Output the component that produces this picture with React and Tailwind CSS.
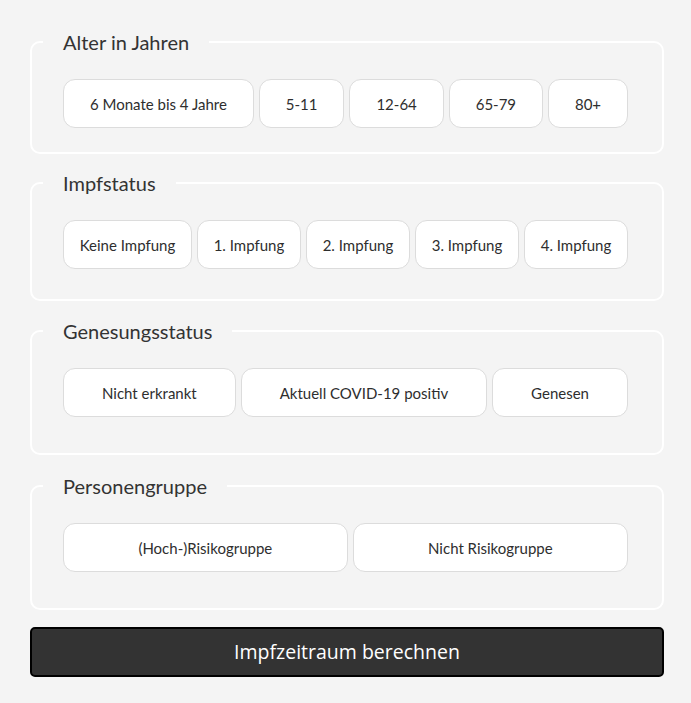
import React from "react";

const groups = [
  { title: "Alter in Jahren", items: ["6 Monate bis 4 Jahre", "5-11", "12-64", "65-79", "80+"], pb: "pb-[24px]", mt: "" },
  { title: "Impfstatus", items: ["Keine Impfung", "1. Impfung", "2. Impfung", "3. Impfung", "4. Impfung"], pb: "pb-[30px]", mt: "mt-[15px]" },
  { title: "Genesungsstatus", items: ["Nicht erkrankt", "Aktuell COVID-19 positiv", "Genesen"], pb: "pb-[36px]", mt: "mt-[16px]" },
  { title: "Personengruppe", items: ["(Hoch-)Risikogruppe", "Nicht Risikogruppe"], pb: "pb-[36px]", mt: "mt-[17px]" },
];

export default function App() {
  return (
    <div
      className="min-h-[703px] bg-[#f4f4f4] pl-[30px] pr-[27px] pt-[28px] pb-[26px] text-[#333]"
      style={{ fontFamily: "Lato, 'Liberation Sans', sans-serif" }}
    >
      {groups.map((g) => (
        <fieldset
          key={g.title}
          className={`m-0 min-w-0 rounded-[10px] border-2 border-white px-[11px] pt-0 ${g.pb} ${g.mt}`}
        >
          <legend className="px-5 text-[20px] leading-[28px] text-[#333]">{g.title}</legend>
          <div className="flex pl-5 pr-[18px] pt-[23px]">
            {g.items.map((it) => (
              <button
                key={it}
                type="button"
                className="mr-[5px] h-[49px] flex-auto whitespace-nowrap rounded-[12px] border border-[#dcdcdc] bg-white px-[15px] text-[15px] leading-5 text-[#2e2e2e]"
                style={{ fontFamily: "Lato, sans-serif" }}
              >
                {it}
              </button>
            ))}
          </div>
        </fieldset>
      ))}
      <button
        type="button"
        className="mt-[17px] block h-[50px] w-full rounded-[5px] border-2 border-black bg-[#333] text-[19.5px] text-white"
        style={{ fontFamily: "'Open Sans', sans-serif" }}
      >
        Impfzeitraum berechnen
      </button>
    </div>
  );
}
